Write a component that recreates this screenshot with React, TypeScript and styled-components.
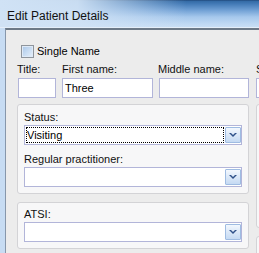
import React from "react";
import styled, { createGlobalStyle } from "styled-components";

const Global = createGlobalStyle`
  html, body { margin: 0; padding: 0; overflow: hidden; background: #ececec; }
  body { font-family: "Liberation Sans", Arial, sans-serif; font-size: 11px; color: #000; }
  * { box-sizing: border-box; }
`;

const Window = styled.div`
  width: 259px;
  height: 253px;
  display: flex;
  flex-direction: column;
  overflow: hidden;
`;

const TitleBar = styled.div`
  height: 28px;
  flex: none;
  padding: 9px 0 0 7px;
  line-height: 14px;
  font-size: 12px;
  color: #111;
  white-space: nowrap;
  background:
    linear-gradient(to right, rgba(208, 226, 245, 1) 0%, rgba(208, 226, 245, 0.95) 30%, rgba(208, 226, 245, 0) 72%),
    linear-gradient(to bottom, #1d4170 0px, #336aa5 1px, #447bb7 4px, #6f9fd4 10px, #a6c8ec 17px, #c0d9f3 24px, #c8def5 27px);
  box-shadow: inset 0 -1px 0 #e4eef9;
`;

const Frame = styled.div`
  flex: 1;
  display: flex;
  min-height: 0;
`;

const SideStrip = styled.div`
  width: 5px;
  flex: none;
  background: #c7dcf3;
`;

const Client = styled.div`
  flex: 1;
  border-left: 1px solid #8797ab;
  border-top: 2px solid #6c7987;
  background: #ececec;
  padding: 15px 0 0 11px;
  display: flex;
  flex-direction: column;
  min-width: 0;
`;

const CheckRow = styled.label`
  display: flex;
  align-items: center;
  gap: 3px;
  height: 13px;
  margin-left: 4px;
  line-height: 13px;
  white-space: nowrap;
`;

const CheckBox = styled.span`
  width: 13px;
  height: 13px;
  flex: none;
  border: 1px solid #8f959c;
  background: linear-gradient(135deg, #a9c6e8 0%, #c8dcf2 50%, #e8f1fb 100%);
  box-shadow: inset 0 0 0 1px #dfeaf7;
`;

const NameRow = styled.div`
  display: flex;
  gap: 6px;
  margin: 5px 0 0 1px;
`;

const NameCol = styled.div<{ $w: number; $shift?: number }>`
  width: ${(p) => p.$w}px;
  flex: none;
  margin-left: ${(p) => p.$shift ?? 0}px;
  display: flex;
  flex-direction: column;
`;

const FieldLabel = styled.div<{ $nudge?: number }>`
  height: 13px;
  line-height: 13px;
  margin-left: ${(p) => p.$nudge ?? 0}px;
  white-space: nowrap;
  color: #111;
`;

const TextBox = styled.div`
  margin-top: 2px;
  height: 20px;
  border: 1px solid #b2b5d9;
  background: #fff;
  padding-left: 2px;
  line-height: 18px;
  white-space: nowrap;
  overflow: hidden;
`;

const GroupsRow = styled.div`
  display: flex;
  gap: 7px;
  margin-top: 6px;
  align-items: flex-start;
`;

const GroupCol = styled.div<{ $w: number }>`
  width: ${(p) => p.$w}px;
  flex: none;
  display: flex;
  flex-direction: column;
  gap: 8px;
`;

const GroupBox = styled.div<{ $padTop: number; $h?: number }>`
  border: 1px solid #d3d3d6;
  border-radius: 3px;
  background: #f7f7f8;
  padding: ${(p) => p.$padTop}px 6px 6px 6px;
  display: flex;
  flex-direction: column;
  ${(p) => (p.$h ? `height: ${p.$h}px;` : "")}
`;

const Field = styled.div`
  display: flex;
  flex-direction: column;
  & + & { margin-top: 8px; }
`;

const ComboLabel = styled(FieldLabel)`
  margin-bottom: 1px;
`;

const Combo = styled.div`
  height: 20px;
  border: 1px solid #b2b5d9;
  background: #fff;
  display: flex;
  align-items: center;
  padding-left: 1px;
`;

const ComboText = styled.div<{ $focused?: boolean }>`
  flex: 1;
  height: 16px;
  margin-right: 1px;
  line-height: 14px;
  white-space: nowrap;
  border: 1px dotted ${(p) => (p.$focused ? "#000" : "transparent")};
`;

const DropButton = styled.div`
  width: 16px;
  height: 16px;
  flex: none;
  border: 1px solid #9fbce2;
  border-radius: 1px;
  background: linear-gradient(to bottom, #f3f8fe 0%, #dbe8f8 50%, #c5daf3 100%);
  display: flex;
  align-items: center;
  justify-content: center;
`;

const Chevron = () => (
  <svg width="14" height="14" viewBox="0 0 14 14">
    <polygon points="3,5 5,5 7,7 9,5 11,5 7,9" fill="#2f5189" />
  </svg>
);

const ComboBox = ({ value, focused }: { value?: string; focused?: boolean }) => (
  <Combo>
    <ComboText $focused={focused}>{value}</ComboText>
    <DropButton>
      <Chevron />
    </DropButton>
  </Combo>
);

export default function App() {
  return (
    <>
      <Global />
      <Window>
        <TitleBar>Edit Patient Details</TitleBar>
        <Frame>
          <SideStrip />
          <Client>
            <CheckRow>
              <CheckBox />
              <span>Single Name</span>
            </CheckRow>
            <NameRow>
              <NameCol $w={38}>
                <FieldLabel $nudge={-1}>Title:</FieldLabel>
                <TextBox />
              </NameCol>
              <NameCol $w={91}>
                <FieldLabel>First name:</FieldLabel>
                <TextBox>Three</TextBox>
              </NameCol>
              <NameCol $w={90}>
                <FieldLabel $nudge={-1}>Middle name:</FieldLabel>
                <TextBox />
              </NameCol>
              <NameCol $w={90} $shift={1}>
                <FieldLabel>Surname:</FieldLabel>
                <TextBox />
              </NameCol>
            </NameRow>
            <GroupsRow>
              <GroupCol $w={232}>
                <GroupBox $padTop={6}>
                  <Field>
                    <ComboLabel>Status:</ComboLabel>
                    <ComboBox value="Visiting" focused />
                  </Field>
                  <Field>
                    <ComboLabel>Regular practitioner:</ComboLabel>
                    <ComboBox />
                  </Field>
                </GroupBox>
                <GroupBox $padTop={5}>
                  <Field>
                    <ComboLabel>ATSI:</ComboLabel>
                    <ComboBox />
                  </Field>
                </GroupBox>
              </GroupCol>
              <GroupCol $w={200}>
                <GroupBox $padTop={6} $h={124} />
                <GroupBox $padTop={6} $h={60} />
              </GroupCol>
            </GroupsRow>
          </Client>
        </Frame>
      </Window>
    </>
  );
}
